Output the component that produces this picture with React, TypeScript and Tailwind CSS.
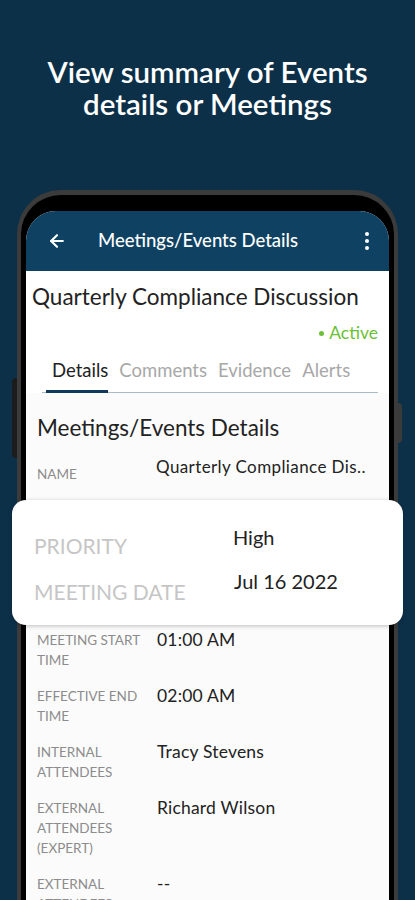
import React from 'react';
import { ArrowLeft } from 'lucide-react';

const font = { fontFamily: 'Lato, "Open Sans", sans-serif' };

const rows = [
  { label: ['MEETING START', 'TIME'], value: '01:00 AM' },
  { label: ['EFFECTIVE END', 'TIME'], value: '02:00 AM' },
  { label: ['INTERNAL', 'ATTENDEES'], value: 'Tracy Stevens' },
  { label: ['EXTERNAL', 'ATTENDEES', '(EXPERT)'], value: 'Richard Wilson' },
  { label: ['EXTERNAL', 'ATTENDEES'], value: '--' },
];

const DetailRow: React.FC<{ label: string[]; value: string }> = ({ label, value }) => (
  <div className="flex items-start">
    <div className="w-[120px] shrink-0 text-[13.5px] leading-[20px] text-[#8c8c8c]">
      {label.map((l, i) => (
        <div key={i}>{l}</div>
      ))}
    </div>
    <div className="text-[17.5px] leading-[20px] tracking-[0.2px] text-[#222]">{value}</div>
  </div>
);

export default function App() {
  return (
    <div className="relative h-[900px] w-full overflow-hidden bg-[#0d3049]" style={font}>
      <h1 className="pt-[56px] text-center text-[29.5px] font-semibold leading-[32px] text-white">
        View summary of Events
        <br />
        details or Meetings
      </h1>

      <div className="relative mx-[17px] mt-[70px]">
        {/* side buttons */}
        <div className="absolute left-[-5px] top-[188px] h-[80px] w-[5px] rounded-l-sm bg-[#1c1c1c]" />
        <div className="absolute right-[-4px] top-[213px] h-[40px] w-[4px] rounded-r-sm bg-[#3a3a3a]" />

        <div className="h-[760px] rounded-t-[44px] border-x-[4px] border-t-[5px] border-[#3b3b3b] bg-black px-[5px] pt-[16px]">
          <div className="h-full overflow-hidden rounded-t-[30px] bg-[#fbfbfb]">
            {/* app bar */}
            <div className="flex h-[60px] items-center bg-[#0f4262] pl-[21px] pr-[20px] text-white shadow-[0_2px_3px_rgba(0,0,0,0.15)]">
              <ArrowLeft size={20} strokeWidth={2.6} />
              <div className="ml-[31px] flex-1 text-[18.5px] font-medium">
                Meetings/Events Details
              </div>
              <div className="flex flex-col gap-[3px]">
                <span className="h-[4px] w-[4px] rounded-full bg-white" />
                <span className="h-[4px] w-[4px] rounded-full bg-white" />
                <span className="h-[4px] w-[4px] rounded-full bg-white" />
              </div>
            </div>

            <div className="bg-white pl-[6px] pr-[11px] pt-[12px]">
              <div className="whitespace-nowrap text-[22.5px] leading-[28px] text-[#222]">
                Quarterly Compliance Discussion
              </div>
              <div className="mt-[10px] flex items-center justify-end gap-[5px] text-[17.5px] leading-[24px] text-[#6cbf36]">
                <span className="h-[5px] w-[5px] rounded-full bg-[#6cbf36]" />
                Active
              </div>
              <div className="ml-[10px] mt-[13px] border-b border-[#a9bcc7]">
                <div className="flex gap-[11px] pl-[10px] text-[18.5px] leading-[24px]">
                  <div className="relative pb-[10px] text-[#222]">
                    Details
                    <span className="absolute bottom-[-1px] left-[-6px] right-0 h-[3px] bg-[#0f3a5e]" />
                  </div>
                  <div className="text-[#a8a8a8]">Comments</div>
                  <div className="text-[#a8a8a8]">Evidence</div>
                  <div className="text-[#a8a8a8]">Alerts</div>
                </div>
              </div>
            </div>

            <div className="bg-[#fbfbfb] pl-[11px] pr-[11px] pt-[21px]">
              <div className="text-[22.5px] leading-[28px] text-[#222]">Meetings/Events Details</div>
              <div className="mt-[15px] flex items-start">
                <div className="mt-[7px] w-[119px] shrink-0 text-[13.5px] leading-[20px] text-[#8c8c8c]">NAME</div>
                <div className="truncate text-[17px] leading-[20px] tracking-[0.4px] text-[#222]">
                  Quarterly Compliance Dis..
                </div>
              </div>
              {/* rows hidden behind the zoom card */}
              <div className="invisible flex h-[146px] flex-col justify-center gap-[16px]">
                <DetailRow label={['PRIORITY']} value="High" />
                <DetailRow label={['MEETING DATE']} value="Jul 16 2022" />
              </div>
              <div className="flex flex-col gap-[16px]">
                {rows.map((r, i) => (
                  <DetailRow key={i} label={r.label} value={r.value} />
                ))}
              </div>
            </div>
          </div>
        </div>
      </div>

      {/* magnified card */}
      <div className="absolute left-[12px] top-[500px] h-[125px] w-[391px] rounded-[14px] bg-white pl-[22px] pt-[24px] shadow-[0_1px_4px_rgba(0,0,0,0.25)]">
        <div className="flex items-start">
          <div className="mt-[9px] w-[199px] text-[21px] leading-[26px] text-[#c6c6c6]">PRIORITY</div>
          <div className="text-[20px] leading-[26px] text-[#222]">High</div>
        </div>
        <div className="mt-[9px] flex items-start">
          <div className="mt-[11px] w-[200px] text-[21px] leading-[26px] text-[#c6c6c6]">MEETING DATE</div>
          <div className="text-[20px] leading-[26px] text-[#222]">Jul 16 2022</div>
        </div>
      </div>
    </div>
  );
}
